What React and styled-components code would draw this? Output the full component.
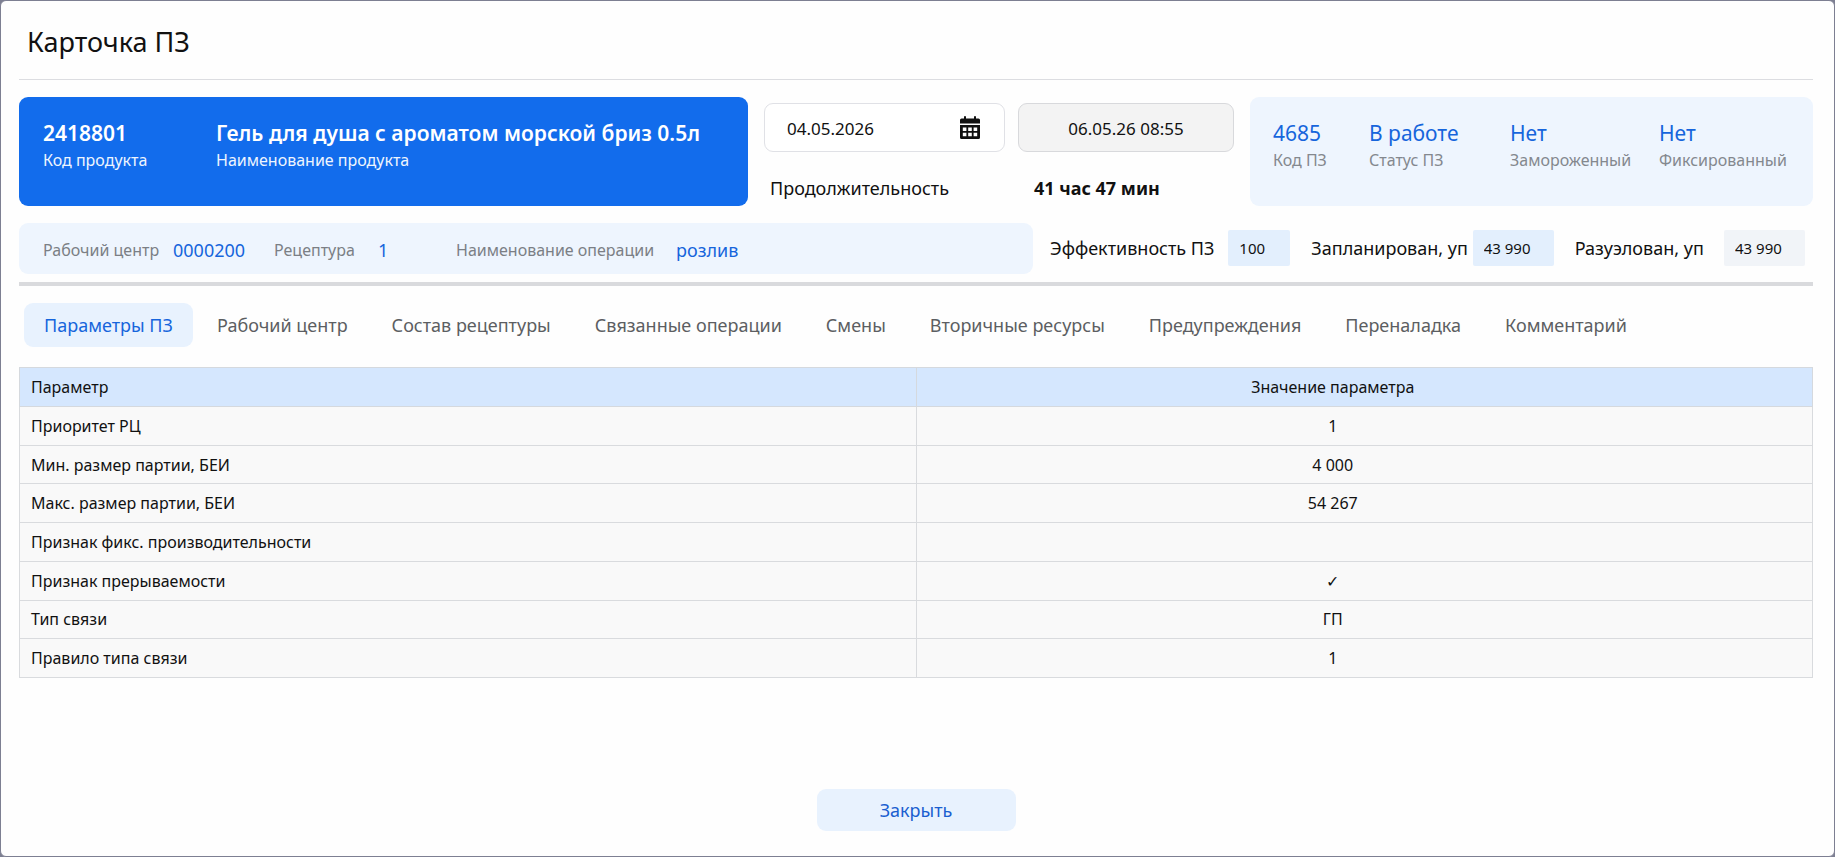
import React, { useState } from "react";
import styled, { createGlobalStyle } from "styled-components";

const GlobalStyle = createGlobalStyle`
  * {
    box-sizing: border-box;
  }

  body {
    margin: 0;
    background-color: #7d7f92;
    font-family: "Noto Sans", "Open Sans", sans-serif;
    color: #111111;
  }

  button, input {
    font-family: inherit;
    color: inherit;
  }
`;

const Card = styled.main`
  display: flex;
  flex-direction: column;
  min-height: 100vh;
  padding: 0 21px 25px 18px;
  background-color: #fefefe;
  border: 1px solid #7d7f92;
  border-radius: 6px;
`;

const Title = styled.h1`
  margin: 0;
  padding: 22px 8px 18px;
  border-bottom: 1px solid #dcdde1;
  font-size: 27px;
  font-weight: 400;
  line-height: 38px;
`;

const TopRow = styled.div`
  display: grid;
  grid-template-columns: 729fr 470fr 563fr;
  gap: 16px;
  margin-top: 17px;
`;

const Panel = styled.dl`
  display: grid;
  grid-template-columns: ${(props) => props.$columns};
  min-height: 109px;
  margin: 0;
  padding: 22px 0 0 ${(props) => (props.$primary ? "24px" : "23px")};
  background-color: ${(props) => (props.$primary ? "#126cec" : "#eef5fe")};
  border-radius: 9px;
`;

const Fact = styled.div`
  display: flex;
  flex-direction: column-reverse;
  justify-content: flex-end;
`;

const FactLabel = styled.dt`
  color: ${(props) => (props.$primary ? "#eef5fe" : "#84888e")};
  font-size: 16px;
  line-height: 26px;
`;

const FactValue = styled.dd`
  margin: 0;
  color: ${(props) => (props.$primary ? "#ffffff" : "#1665dc")};
  font-size: 21px;
  font-weight: ${(props) => (props.$primary ? 600 : 400)};
  line-height: 28px;
`;

const Dates = styled.div`
  display: grid;
  grid-template-columns: minmax(0, 241fr) minmax(0, 216fr);
  column-gap: 13px;
  row-gap: 24px;
  align-content: start;
  padding-top: 6px;
`;

const DateBox = styled.div`
  display: flex;
  align-items: center;
  height: 49px;
  padding: 0 24px 0 22px;
  border: 1px solid #e0e1e6;
  border-radius: 9px;
  background-color: #ffffff;
`;

const DateInput = styled.input`
  flex: 1;
  min-width: 0;
  padding: 2px 0 0;
  border: 0;
  outline: 0;
  background: transparent;
  font-size: 17px;
`;

const CalendarButton = styled.button`
  display: flex;
  padding: 0;
  border: 0;
  background: transparent;
  color: #111111;
  cursor: pointer;
`;

const EndDate = styled.input`
  width: 100%;
  height: 49px;
  padding: 2px 0 0;
  border: 1px solid #d8d9dc;
  border-radius: 9px;
  outline: 0;
  background-color: #f3f3f3;
  font-size: 17px;
  text-align: center;
`;

const DurationLabel = styled.span`
  padding-left: 6px;
  font-size: 18px;
  line-height: 24px;
`;

const Duration = styled.strong`
  padding-left: 16px;
  font-size: 18px;
  font-weight: 700;
  line-height: 24px;
`;

const SecondRow = styled.div`
  display: grid;
  grid-template-columns: 1014fr 755fr;
  column-gap: 17px;
  margin-top: 17px;
  padding-right: 8px;
`;

const OperationBar = styled.dl`
  display: grid;
  grid-template-columns: 130px 101px 104px 78px 220px 1fr;
  align-items: center;
  height: 51px;
  margin: 0;
  padding: 2px 0 0 24px;
  background-color: #eef5fe;
  border-radius: 9px;
`;

const BarLabel = styled.dt`
  color: #7b7f85;
  font-size: 16px;
  line-height: 24px;
`;

const BarValue = styled.dd`
  margin: 0;
  color: #1665dc;
  font-size: 18px;
  line-height: 24px;
`;

const Fields = styled.div`
  display: grid;
  grid-template-columns: 240fr 242fr 230fr;
  column-gap: 21px;
  align-items: center;
  padding-bottom: 2px;
`;

const Field = styled.div`
  display: flex;
  align-items: center;
  justify-content: space-between;
`;

const FieldLabel = styled.label`
  font-size: 18px;
  line-height: 24px;
  white-space: nowrap;
`;

const FieldInput = styled.input`
  width: ${(props) => (props.$short ? "62px" : "81px")};
  height: 36px;
  padding: 0 0 0 11px;
  border: 0;
  border-radius: 2px;
  outline: 0;
  background-color: ${(props) => (props.readOnly ? "#f1f4f8" : "#e3effd")};
  font-size: 15px;
`;

const Divider = styled.hr`
  width: 100%;
  height: 4px;
  margin: 8px 0 17px;
  border: 0;
  background-color: #d9dadd;
`;

const Tabs = styled.nav`
  display: flex;
  flex-wrap: wrap;
  gap: 4px;
  padding-left: 5px;
`;

const Tab = styled.button`
  height: 44px;
  padding: 0 20px;
  border: 0;
  border-radius: 9px;
  background-color: ${(props) => (props.$active ? "#e8f2fe" : "transparent")};
  color: ${(props) => (props.$active ? "#1665dc" : "#5c5e62")};
  font-size: 18px;
  cursor: pointer;
`;

const ParamTable = styled.table`
  width: 100%;
  height: 311px;
  margin-top: 20px;
  border-collapse: collapse;
  table-layout: fixed;
  font-size: 16px;
  line-height: 22px;
`;

const HeadCell = styled.th`
  height: 39px;
  padding: ${(props) => (props.$value ? "0 63px 0 0" : "0 11px")};
  border: 1px solid #d5d9de;
  background-color: #d5e7fe;
  font-weight: 400;
  text-align: ${(props) => (props.$value ? "center" : "left")};
`;

const Cell = styled.td`
  height: 38px;
  padding: ${(props) => (props.$value ? "0 63px 0 0" : "0 11px")};
  border: 1px solid #d9dbde;
  background-color: #f9f9f9;
  text-align: ${(props) => (props.$value ? "center" : "left")};
`;

const CloseButton = styled.button`
  align-self: center;
  width: 199px;
  height: 42px;
  margin-top: auto;
  border: 0;
  border-radius: 9px;
  background-color: #e8f2fe;
  color: #1a5fd0;
  font-size: 18px;
  cursor: pointer;
`;

const tabs = [
  "Параметры ПЗ",
  "Рабочий центр",
  "Состав рецептуры",
  "Связанные операции",
  "Смены",
  "Вторичные ресурсы",
  "Предупреждения",
  "Переналадка",
  "Комментарий",
];

const status = [
  ["Код ПЗ", "4685"],
  ["Статус ПЗ", "В работе"],
  ["Замороженный", "Нет"],
  ["Фиксированный", "Нет"],
];

const params = [
  ["Приоритет РЦ", "1"],
  ["Мин. размер партии, БЕИ", "4 000"],
  ["Макс. размер партии, БЕИ", "54 267"],
  ["Признак фикс. производительности", ""],
  ["Признак прерываемости", "✓"],
  ["Тип связи", "ГП"],
  ["Правило типа связи", "1"],
];

function CalendarIcon() {
  return (
    <svg width="20" height="23" viewBox="0 0 20 23" fill="currentColor" aria-hidden="true">
      <path d="M4 1a1 1 0 0 1 2 0v1.500h8V1a1 1 0 0 1 2 0v1.500h2.500a1.500 1.500 0 0 1 1.500 1.500v3.500H0V4a1.500 1.500 0 0 1 1.500-1.500H4z" />
      <path
        fillRule="evenodd"
        d="M0 9h20v12.500a1.500 1.500 0 0 1-1.500 1.500h-17a1.500 1.500 0 0 1-1.500-1.500zM2.800 11.500v3.400h3.600v-3.400zM8.200 11.500v3.400h3.600v-3.400zM13.600 11.500v3.400h3.600v-3.400zM2.800 16.800v3.400h3.600v-3.400zM8.200 16.800v3.400h3.600v-3.400zM13.600 16.800v3.400h3.600v-3.400z"
      />
    </svg>
  );
}

function App() {
  const [active, setActive] = useState(tabs[0]);
  const [start, setStart] = useState("04.05.2026");

  return (
    <>
      <GlobalStyle />
      <Card>
        <Title>Карточка ПЗ</Title>

        <TopRow>
          <Panel $primary $columns="173px 1fr">
            <Fact>
              <FactLabel $primary>Код продукта</FactLabel>
              <FactValue $primary>2418801</FactValue>
            </Fact>
            <Fact>
              <FactLabel $primary>Наименование продукта</FactLabel>
              <FactValue $primary>Гель для душа с ароматом морской бриз 0.5л</FactValue>
            </Fact>
          </Panel>

          <Dates>
            <DateBox>
              <DateInput
                aria-label="Дата начала"
                value={start}
                onChange={(e) => setStart(e.target.value)}
              />
              <CalendarButton type="button" aria-label="Выбрать дату">
                <CalendarIcon />
              </CalendarButton>
            </DateBox>
            <EndDate aria-label="Дата окончания" value="06.05.26 08:55" readOnly />
            <DurationLabel>Продолжительность</DurationLabel>
            <Duration>41 час 47 мин</Duration>
          </Dates>

          <Panel $columns="96fr 141fr 149fr 154fr">
            {status.map(([label, value]) => (
              <Fact key={label}>
                <FactLabel>{label}</FactLabel>
                <FactValue>{value}</FactValue>
              </Fact>
            ))}
          </Panel>
        </TopRow>

        <SecondRow>
          <OperationBar>
            <BarLabel>Рабочий центр</BarLabel>
            <BarValue>0000200</BarValue>
            <BarLabel>Рецептура</BarLabel>
            <BarValue>1</BarValue>
            <BarLabel>Наименование операции</BarLabel>
            <BarValue>розлив</BarValue>
          </OperationBar>

          <Fields>
            <Field>
              <FieldLabel htmlFor="efficiency">Эффективность ПЗ</FieldLabel>
              <FieldInput id="efficiency" $short defaultValue="100" />
            </Field>
            <Field>
              <FieldLabel htmlFor="planned">Запланирован, уп</FieldLabel>
              <FieldInput id="planned" defaultValue="43 990" />
            </Field>
            <Field>
              <FieldLabel htmlFor="unbound">Разуэлован, уп</FieldLabel>
              <FieldInput id="unbound" value="43 990" readOnly />
            </Field>
          </Fields>
        </SecondRow>

        <Divider />

        <Tabs>
          {tabs.map((tab) => (
            <Tab
              key={tab}
              type="button"
              $active={tab === active}
              onClick={() => setActive(tab)}
            >
              {tab}
            </Tab>
          ))}
        </Tabs>

        <ParamTable>
          <thead>
            <tr>
              <HeadCell>Параметр</HeadCell>
              <HeadCell $value>Значение параметра</HeadCell>
            </tr>
          </thead>
          <tbody>
            {params.map(([name, value]) => (
              <tr key={name}>
                <Cell>{name}</Cell>
                <Cell $value>{value}</Cell>
              </tr>
            ))}
          </tbody>
        </ParamTable>

        <CloseButton type="button">Закрыть</CloseButton>
      </Card>
    </>
  );
}
export default App;
